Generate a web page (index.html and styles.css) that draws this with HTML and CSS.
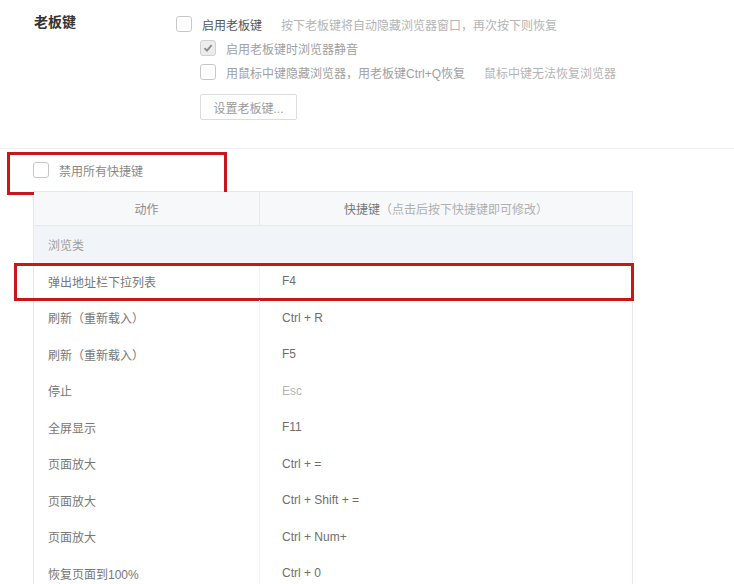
FILE: index.html
```html
<!DOCTYPE html>
<html lang="zh-CN">
<head>
    <meta charset="UTF-8">
    <title>快捷键设置</title>
    <link rel="stylesheet" href="styles.css">
</head>
<body>
    <div class="boss">
        <div class="boss-title">老板键</div>
        <div class="boss-options">
            <div class="opt">
                <span class="box"></span>
                <span class="opt-main">启用老板键</span>
                <span class="hint">按下老板键将自动隐藏浏览器窗口，再次按下则恢复</span>
            </div>
            <div class="opt sub">
                <span class="box checked">
                    <svg width="10" height="10" viewBox="0 0 10 10"><path d="M1.5 5.2 L4 7.6 L8.6 2.2" fill="none" stroke="#8a8a8a" stroke-width="1.8"/></svg>
                </span>
                <span class="opt-sub">启用老板键时浏览器静音</span>
            </div>
            <div class="opt sub">
                <span class="box"></span>
                <span class="opt-sub">用鼠标中键隐藏浏览器，用老板键Ctrl+Q恢复</span>
                <span class="hint">鼠标中键无法恢复浏览器</span>
            </div>
            <button class="btn">设置老板键...</button>
        </div>
    </div>

    <div class="disable-row">
        <span class="box"></span>
        <span class="opt-sub">禁用所有快捷键</span>
        <div class="mark mark-disable"></div>
    </div>

    <div class="keys">
        <div class="row head">
            <div class="cell">动作</div>
            <div class="cell"><span class="strong">快捷键</span>（点击后按下快捷键即可修改）</div>
        </div>
        <div class="row group">
            <div class="cell">浏览类</div>
        </div>
        <div class="row">
            <div class="cell">弹出地址栏下拉列表</div>
            <div class="cell key">F4</div>
            <div class="mark mark-row"></div>
        </div>
        <div class="row">
            <div class="cell">刷新（重新载入）</div>
            <div class="cell key">Ctrl + R</div>
        </div>
        <div class="row">
            <div class="cell">刷新（重新载入）</div>
            <div class="cell key">F5</div>
        </div>
        <div class="row">
            <div class="cell">停止</div>
            <div class="cell key off">Esc</div>
        </div>
        <div class="row">
            <div class="cell">全屏显示</div>
            <div class="cell key">F11</div>
        </div>
        <div class="row">
            <div class="cell">页面放大</div>
            <div class="cell key">Ctrl + =</div>
        </div>
        <div class="row">
            <div class="cell">页面放大</div>
            <div class="cell key">Ctrl + Shift + =</div>
        </div>
        <div class="row">
            <div class="cell">页面放大</div>
            <div class="cell key">Ctrl + Num+</div>
        </div>
        <div class="row">
            <div class="cell">恢复页面到100%</div>
            <div class="cell key">Ctrl + 0</div>
        </div>
    </div>
</body>
</html>
```

FILE: styles.css
```css
body {
    margin: 0;
    background: #fff;
    font-family: "Liberation Sans", "Noto Sans CJK SC", sans-serif;
    font-size: 12px;
    color: #777;
    overflow: hidden;
}
.boss {
    display: flex;
    padding: 12px 0 28px 34px;
    border-bottom: 1px solid #eef0f2;
}
.boss-title {
    width: 142px;
    font-size: 14px;
    font-weight: bold;
    line-height: 20px;
    color: #333;
}
.opt {
    display: flex;
    align-items: center;
    height: 24px;
}
.opt.sub { margin-left: 24px; }
.box {
    display: inline-flex;
    align-items: center;
    justify-content: center;
    box-sizing: border-box;
    width: 16px;
    height: 16px;
    border: 1px solid #c6c6c6;
    border-radius: 3px;
    background: #fff;
    margin-right: 10px;
    flex: none;
}
.box.checked {
    background: #ececec;
    border-color: #d0d0d0;
}
.opt-main { color: #555; }
.opt-sub { color: #a0a0a0; }
.hint {
    color: #b4b4b4;
    margin-left: 19px;
}
.btn {
    display: block;
    margin: 10px 0 0 24px;
    width: 97px;
    height: 26px;
    padding: 0;
    border: 1px solid #dcdcdc;
    border-radius: 2px;
    background: #fff;
    color: #9a9a9a;
    font: inherit;
}
.disable-row {
    position: relative;
    display: flex;
    align-items: center;
    height: 42px;
    padding-left: 33px;
}
.disable-row .opt-sub { color: #888; }
.mark {
    position: absolute;
    box-sizing: border-box;
    border: 3px solid #c8161d;
    pointer-events: none;
}
.mark-disable {
    left: 7px;
    top: 3px;
    width: 220px;
    height: 43px;
}
.keys {
    margin-left: 33px;
    width: 600px;
    box-sizing: border-box;
    border: 1px solid #e5e8ec;
    border-bottom: none;
}
.row {
    position: relative;
    display: grid;
    grid-template-columns: 226px 1fr;
    height: 36.5px;
    align-items: center;
}
.row .cell:first-child {
    padding-left: 14px;
    border-right: 1px solid #f0f1f3;
    height: 100%;
    display: flex;
    align-items: center;
}
.row .key {
    padding-left: 22px;
    color: #6e6e6e;
}
.row .key.off { color: #b4b4b4; }
.row.head {
    height: 33px;
    background: #f6f8fa;
    border-bottom: 1px solid #e5e8ec;
    color: #b0b0b0;
}
.row.head .cell {
    text-align: center;
    justify-content: center;
    padding-left: 0;
}
.row.head .cell:first-child {
    border-right-color: #e5e8ec;
    color: #8c8c8c;
}
.row.head .strong { color: #777; }
.row.group {
    height: 37px;
    background: #f1f4f8;
    grid-template-columns: 1fr;
}
.row.group .cell:first-child {
    border-right: none;
    color: #a0a0a0;
}
.mark-row {
    left: -20px;
    top: 0;
    width: 620px;
    height: 38px;
}
```
